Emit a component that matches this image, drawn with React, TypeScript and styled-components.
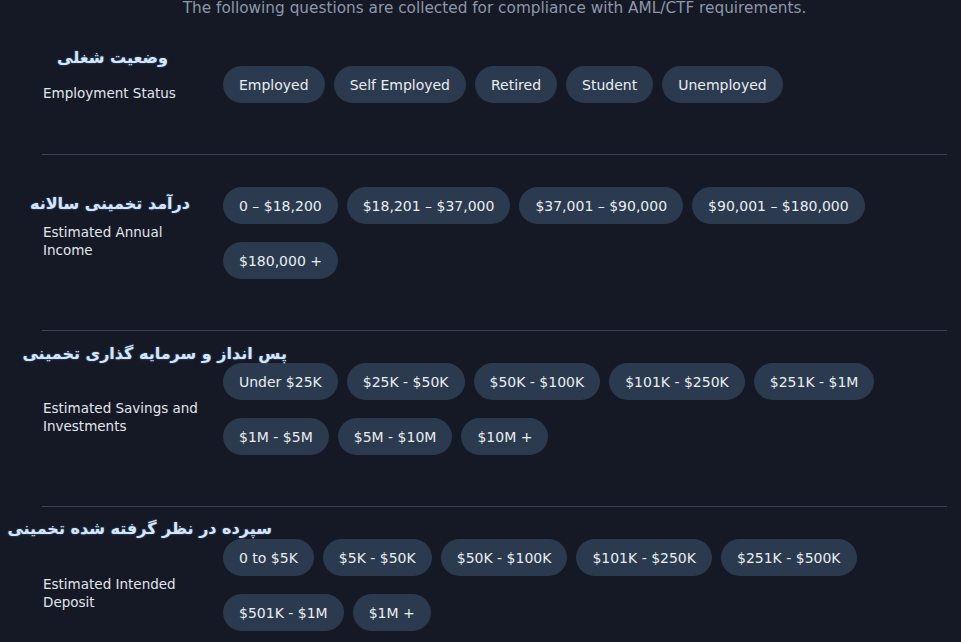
import React from "react";
import styled, { createGlobalStyle } from "styled-components";

const GlobalStyle = createGlobalStyle`
  html, body {
    margin: 0;
    padding: 0;
    background: #151926;
    overflow: hidden;
  }
  * {
    box-sizing: border-box;
  }
`;

type Question = {
  fa: string;
  faRight: number;
  faTop: number;
  label: string;
  rows: string[][];
};

const questions: Question[] = [
  {
    fa: "وضعیت شغلی",
    faRight: 779,
    faTop: 12,
    label: "Employment Status",
    rows: [["Employed", "Self Employed", "Retired", "Student", "Unemployed"]],
  },
  {
    fa: "درآمد تخمینی سالانه",
    faRight: 757,
    faTop: 37,
    label: "Estimated Annual Income",
    rows: [
      ["0 – $18,200", "$18,201 – $37,000", "$37,001 – $90,000", "$90,001 – $180,000"],
      ["$180,000 +"],
    ],
  },
  {
    fa: "پس انداز و سرمایه گذاری تخمینی",
    faRight: 660,
    faTop: 11,
    label: "Estimated Savings and Investments",
    rows: [
      ["Under $25K", "$25K - $50K", "$50K - $100K", "$101K - $250K", "$251K - $1M"],
      ["$1M - $5M", "$5M - $10M", "$10M +"],
    ],
  },
  {
    fa: "سپرده در نظر گرفته شده تخمینی",
    faRight: 675,
    faTop: 10,
    label: "Estimated Intended Deposit",
    rows: [
      ["0 to $5K", "$5K - $50K", "$50K - $100K", "$101K - $250K", "$251K - $500K"],
      ["$501K - $1M", "$1M +"],
    ],
  },
];

export default function App() {
  return (
    <>
      <GlobalStyle />
      <Page>
        <Intro>The following questions are collected for compliance with AML/CTF requirements.</Intro>
        {questions.map((q) => (
          <Section key={q.label}>
            <PersianTitle dir="rtl" $right={q.faRight} $top={q.faTop}>
              {q.fa}
            </PersianTitle>
            <Label>{q.label}</Label>
            <Options>
              {q.rows.map((row, i) => (
                <OptionRow key={i}>
                  {row.map((opt) => (
                    <Pill key={opt} type="button">
                      {opt}
                    </Pill>
                  ))}
                </OptionRow>
              ))}
            </Options>
          </Section>
        ))}
      </Page>
    </>
  );
}

const Page = styled.div`
  width: 961px;
  height: 642px;
  padding: 0 14px 0 42px;
  font-family: "DejaVu Sans", "Liberation Sans", sans-serif;
  overflow: hidden;
`;

const Intro = styled.p`
  margin: -2px 0 16px;
  line-height: 20px;
  font-size: 15.3px;
  color: #8e97aa;
  text-align: center;
  white-space: nowrap;
`;

const Section = styled.section`
  position: relative;
  display: flex;
  align-items: center;
  padding: 32px 0 51px;
  border-bottom: 1px solid #3a4356;
`;

const PersianTitle = styled.div<{ $right: number; $top: number }>`
  position: absolute;
  right: ${(p) => p.$right}px;
  top: ${(p) => p.$top}px;
  font-family: "DejaVu Sans", sans-serif;
  font-weight: bold;
  font-size: 16px;
  line-height: 24px;
  color: #d3e6fb;
  white-space: nowrap;
  text-shadow: 0 0 2px rgba(120, 170, 230, 0.6);
`;

const Label = styled.div`
  flex: 0 0 181px;
  padding: 16px 12px 0 1px;
  font-size: 13.5px;
  line-height: 18px;
  color: #e1e5ec;
`;

const Options = styled.div`
  display: flex;
  flex-direction: column;
  gap: 18px;
`;

const OptionRow = styled.div`
  display: flex;
  gap: 9px;
`;

const Pill = styled.button`
  height: 37px;
  padding: 0 16px;
  border: none;
  border-radius: 19px;
  background: #2b3a4f;
  color: #e9edf2;
  font-family: inherit;
  font-size: 14px;
  white-space: nowrap;
  cursor: pointer;
`;
